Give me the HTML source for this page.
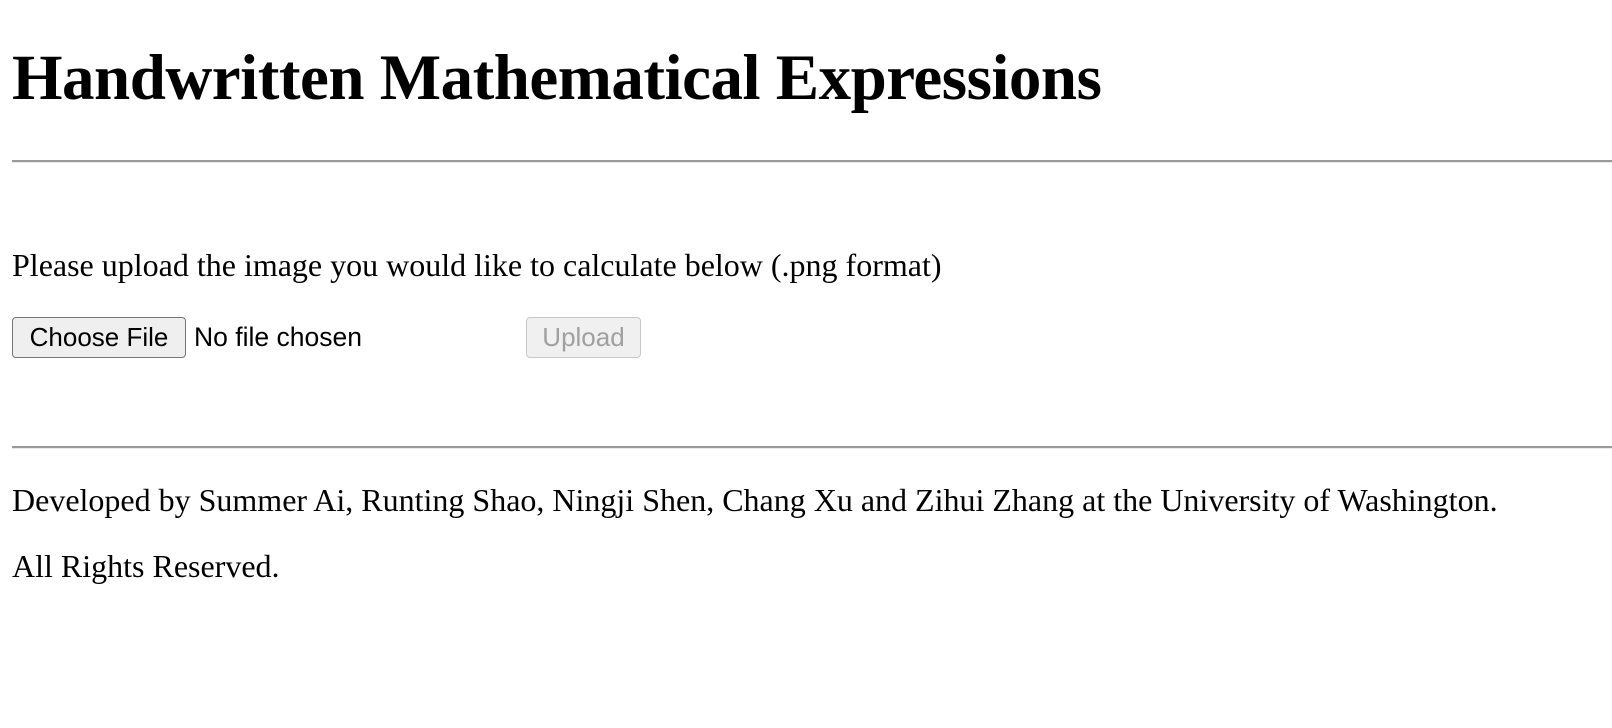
<!DOCTYPE html>
<html><head><style>
body{margin:0;background:#fff;width:1612px;height:728px;overflow:hidden;position:relative;font-family:"Liberation Serif",serif;color:#000}
.a{position:absolute;white-space:nowrap;line-height:1}
h1{position:absolute;margin:0;left:12px;top:46px;font-size:65px;font-weight:bold;line-height:1;white-space:nowrap;letter-spacing:-0.5px}
.hr{position:absolute;left:12px;right:0;height:0;border-top:2px solid #9a9a9a;border-bottom:1px solid #e8e8e8}
.t{font-size:32px;left:12px}
.btn{position:absolute;box-sizing:border-box;border:1.5px solid #767676;border-radius:4px;background:#efefef;font-family:"Liberation Sans",sans-serif;font-size:26px;text-align:center;line-height:38px}
</style></head><body>
<h1>Handwritten Mathematical Expressions</h1>
<div class="hr" style="top:160px"></div>
<div class="a t" style="top:249px">Please upload the image you would like to calculate below (.png format)</div>
<div class="btn" style="left:12px;top:317px;width:174px;height:41px;color:#000">Choose File</div>
<div class="a" style="left:194px;top:324px;font-family:'Liberation Sans',sans-serif;font-size:26.5px">No file chosen</div>
<div class="btn" style="left:526px;top:317px;width:115px;height:41px;color:#a0a0a0;border-color:#c8c8c8;background:#f0f0f0">Upload</div>
<div class="hr" style="top:446px"></div>
<div class="a t" style="top:484px">Developed by Summer Ai, Runting Shao, Ningji Shen, Chang Xu and Zihui Zhang at the University of Washington.</div>
<div class="a t" style="top:550px">All Rights Reserved.</div>
</body></html>
